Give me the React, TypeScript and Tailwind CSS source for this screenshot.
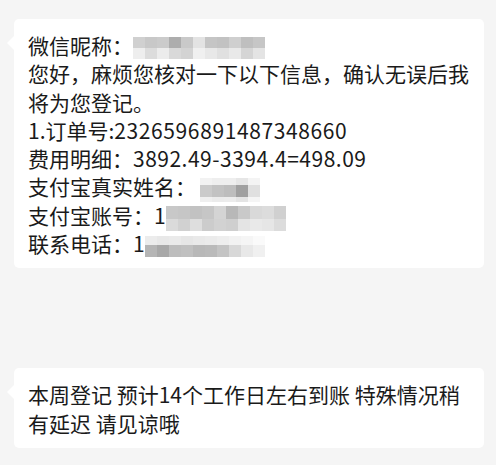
import React from "react";

type Row = { h: string; cells: string[] };

// pixelated blur blocks over private info
function Mosaic({ rows }: { rows: Row[] }) {
  return (
    <span className="inline-flex flex-col align-middle -my-[4px]">
      {rows.map((row, i) => (
        <span key={i} className="flex">
          {row.cells.map((c, j) => (
            <span key={j} className={`w-[12px] ${row.h} ${c}`} />
          ))}
        </span>
      ))}
    </span>
  );
}

const nickRows: Row[] = [
  {
    h: "h-[11px]",
    cells: ["bg-[#d0d0d0]", "bg-[#c8c8c8]", "bg-[#cbcbcb]", "bg-[#adadad]", "bg-[#c9c9c9]", "bg-[#e3e3e3]", "bg-[#c5c5c5]", "bg-[#c2c2c2]", "bg-[#cfcfcf]", "bg-[#bfbfbf]", "bg-[#c6c6c6]"],
  },
  {
    h: "h-[11px]",
    cells: ["bg-[#eeeeee]", "bg-[#dcdcdc]", "bg-[#ececec]", "bg-[#d9d9d9]", "bg-[#d3d3d3]", "bg-[#f0f0f0]", "bg-[#e8e8e8]", "bg-[#e0e0e0]", "bg-[#e9e9e9]", "bg-[#d5d5d5]", "bg-[#e4e4e4]"],
  },
];

const nameRows: Row[] = [
  { h: "h-[7px]", cells: ["bg-[#f2f2f2]", "bg-[#eeeeee]", "bg-[#eeeeee]", "bg-[#e6e6e6]", "bg-[#f4f4f4]"] },
  { h: "h-[12px]", cells: ["bg-[#cacaca]", "bg-[#c2c2c2]", "bg-[#bdbdbd]", "bg-[#a0a0a0]", "bg-[#e0e0e0]"] },
  { h: "h-[5px]", cells: ["bg-[#efefef]", "bg-[#ebebeb]", "bg-[#ececec]", "bg-[#e4e4e4]", "bg-[#f5f5f5]"] },
];

const accountRows: Row[] = [
  {
    h: "h-[13px]",
    cells: ["bg-[#c8c8c8]", "bg-[#c6c6c6]", "bg-[#c2c2c2]", "bg-[#c6c6c6]", "bg-[#d4d4d4]", "bg-[#b8b8b8]", "bg-[#c9c9c9]", "bg-[#d9d9d9]", "bg-[#dcdcdc]", "bg-[#d0d0d0]"],
  },
  {
    h: "h-[12px]",
    cells: ["bg-[#dadada]", "bg-[#d1d1d1]", "bg-[#dedede]", "bg-[#cccccc]", "bg-[#d2d2d2]", "bg-[#cfcfcf]", "bg-[#e4e4e4]", "bg-[#e9e9e9]", "bg-[#e6e6e6]", "bg-[#dcdcdc]"],
  },
];

const phoneRows: Row[] = [
  {
    h: "h-[9px]",
    cells: ["bg-[#ececec]", "bg-[#e8e8e8]", "bg-[#eaeaea]", "bg-[#e6e6e6]", "bg-[#e9e9e9]", "bg-[#ebebeb]", "bg-[#eeeeee]", "bg-[#f2f2f2]", "bg-[#f5f5f5]", "bg-[#fafafa]"],
  },
  {
    h: "h-[12px]",
    cells: ["bg-[#b5b5b5]", "bg-[#a8a8a8]", "bg-[#bdbdbd]", "bg-[#c0c0c0]", "bg-[#b8b8b8]", "bg-[#bababa]", "bg-[#c4c4c4]", "bg-[#d8d8d8]", "bg-[#e8e8e8]", "bg-[#f0f0f0]"],
  },
];

function Bubble({ children }: { children: React.ReactNode }) {
  return (
    <div className="relative w-fit max-w-[470px] bg-white rounded-[5px] pl-[14px] pr-[14px] pt-[12px] pb-[11px]">
      {/* left arrow */}
      <span className="absolute left-[-7px] top-[17px] w-0 h-0 border-y-[7px] border-y-transparent border-r-[7px] border-r-white" />
      {children}
    </div>
  );
}

export default function App() {
  return (
    <div className="w-[496px] h-[465px] bg-[#f5f5f5] pt-[19px] pl-[14px] pr-[10px] flex flex-col gap-[100px] font-['Microsoft_YaHei','Noto_Sans_CJK_SC',sans-serif] text-[21px] leading-[28.3px] text-[#1a1a1a] overflow-hidden">
      <Bubble>
        <p>
          微信昵称：<Mosaic rows={nickRows} />
        </p>
        <p>您好，麻烦您核对一下以下信息，确认无误后我将为您登记。</p>
        <p>
          1.订单号:<span className="tracking-[0.6px]">2326596891487348660</span>
        </p>
        <p>
          费用明细：<span className="tracking-[0.5px]">3892.49-3394.4=498.09</span>
        </p>
        <p>
          支付宝真实姓名：<span className="inline-block w-[4px]" />
          <Mosaic rows={nameRows} />
        </p>
        <p>
          支付宝账号：1<Mosaic rows={accountRows} />
        </p>
        <p>
          联系电话：1<Mosaic rows={phoneRows} />
        </p>
      </Bubble>
      <Bubble>
        <p>本周登记 预计14个工作日左右到账 特殊情况稍有延迟 请见谅哦</p>
      </Bubble>
    </div>
  );
}
